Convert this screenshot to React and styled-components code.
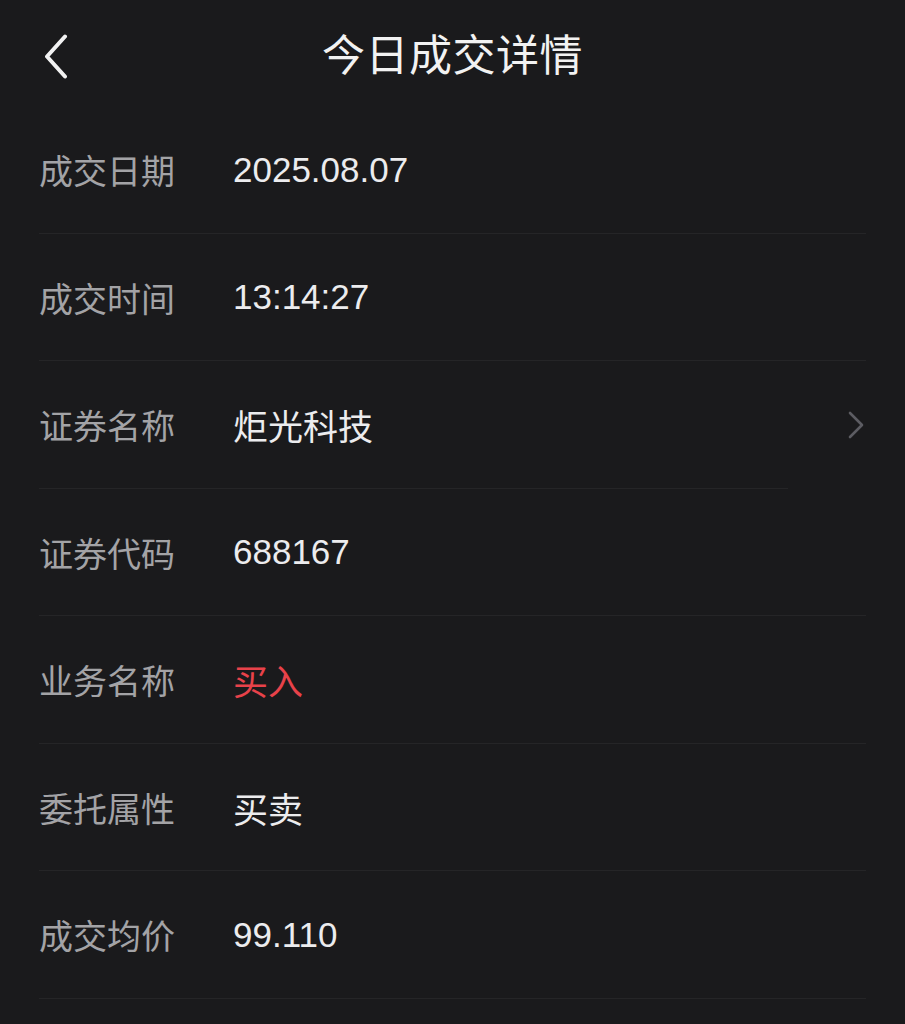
import React from "react";
import styled, { createGlobalStyle } from "styled-components";

const rows = [
  { label: "成交日期", value: "2025.08.07" },
  { label: "成交时间", value: "13:14:27" },
  { label: "证券名称", value: "炬光科技", link: true },
  { label: "证券代码", value: "688167" },
  { label: "业务名称", value: "买入", tone: "red" },
  { label: "委托属性", value: "买卖" },
  { label: "成交均价", value: "99.110" },
];

export default function App() {
  return (
    <>
      <GlobalStyle />
      <Page>
        <Header>
          <BackButton aria-label="返回">
            <svg width="24" height="45" viewBox="0 0 24 45" fill="none">
              <path d="M21 2.5 L3 22.5 L21 42.5" stroke="#f2f2f2" strokeWidth="4" strokeLinecap="round" strokeLinejoin="round" />
            </svg>
          </BackButton>
          <Title>今日成交详情</Title>
        </Header>
        <List>
          {rows.map((row) => (
            <Row key={row.label} $short={row.link}>
              <Label>{row.label}</Label>
              <Value $tone={row.tone}>{row.value}</Value>
              {row.link && (
                <Arrow>
                  <svg width="18" height="28" viewBox="0 0 18 28" fill="none">
                    <path d="M3 2 L15 14 L3 26" stroke="#5c5c62" strokeWidth="2.6" strokeLinecap="round" strokeLinejoin="round" />
                  </svg>
                </Arrow>
              )}
            </Row>
          ))}
        </List>
      </Page>
    </>
  );
}

const GlobalStyle = createGlobalStyle`
  html, body {
    margin: 0;
    padding: 0;
    background: #1a1a1c;
  }
  body {
    font-family: "Liberation Sans", "Noto Sans CJK SC", sans-serif;
    -webkit-font-smoothing: antialiased;
  }
`;

const Page = styled.div`
  width: 905px;
  height: 1024px;
  background: #1a1a1c;
  overflow: hidden;
`;

const Header = styled.div`
  position: relative;
  height: 106px;
  display: flex;
  align-items: center;
  justify-content: center;
  padding-bottom: 2px;
  box-sizing: border-box;
`;

const BackButton = styled.button`
  position: absolute;
  left: 44px;
  top: 34px;
  padding: 0;
  border: none;
  background: none;
  display: flex;
`;

const Title = styled.h1`
  margin: 0;
  font-family: "Noto Sans CJK SC", sans-serif;
  font-size: 43px;
  font-weight: 400;
  color: #f2f2f2;
  letter-spacing: 0.5px;
`;

const List = styled.div`
  padding: 0 39px;
`;

const Row = styled.div`
  position: relative;
  height: 127.5px;
  display: flex;
  align-items: center;
  box-sizing: border-box;

  &::after {
    content: "";
    position: absolute;
    left: 0;
    right: ${(p) => (p.$short ? "78px" : "0")};
    bottom: 0;
    height: 1px;
    background: #252527;
  }
`;

const Label = styled.span`
  width: 194px;
  flex-shrink: 0;
  font-family: "Noto Sans CJK SC", sans-serif;
  font-size: 34px;
  color: #a3a3a6;
`;

const Value = styled.span`
  flex: 1;
  font-size: 35px;
  color: ${(p) => (p.$tone === "red" ? "#e8424a" : "#ececee")};
`;

const Arrow = styled.span`
  display: flex;
  margin-right: 1px;
`;
